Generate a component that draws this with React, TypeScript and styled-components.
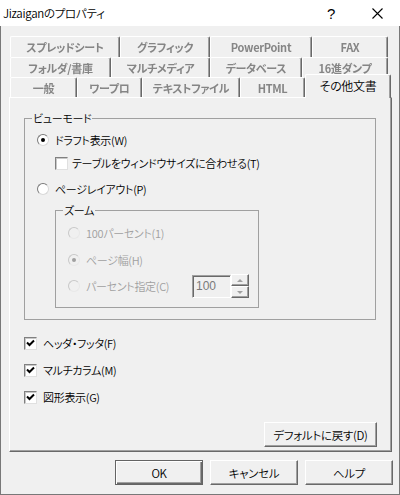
import React from "react";
import styled, { createGlobalStyle, css } from "styled-components";

const GlobalStyle = createGlobalStyle`
  * { box-sizing: border-box; }
  html, body { margin: 0; padding: 0; background: #f0f0f0; }
  body {
    font-family: "Noto Sans CJK JP", "Noto Sans", sans-serif;
    font-size: 11px;
    font-weight: 350;
    letter-spacing: -0.3px;
    color: #000;
    font-feature-settings: "palt";
  }
`;

type TabDef = { label: string; w: number; active?: boolean };

const tabRows: { h: number; tabs: TabDef[] }[] = [
  {
    h: 21,
    tabs: [
      { label: "スプレッドシート", w: 110 },
      { label: "グラフィック", w: 90 },
      { label: "PowerPoint", w: 102 },
      { label: "FAX", w: 76 },
    ],
  },
  {
    h: 20,
    tabs: [
      { label: "フォルダ/書庫", w: 101 },
      { label: "マルチメディア", w: 99 },
      { label: "データベース", w: 92 },
      { label: "16進ダンプ", w: 86 },
    ],
  },
  {
    h: 20,
    tabs: [
      { label: "一般", w: 67 },
      { label: "ワープロ", w: 65 },
      { label: "テキストファイル", w: 98 },
      { label: "HTML", w: 65 },
      { label: "その他文書", w: 86, active: true },
    ],
  },
];

export default function App() {
  return (
    <>
      <GlobalStyle />
      <Window>
        <TitleBar>
          <Title>Jizaiganのプロパティ</Title>
          <CaptionButton>?</CaptionButton>
          <CaptionButton>
            <svg width="11" height="11" viewBox="0 0 11 11">
              <path d="M0.5 0.5 L10.5 10.5 M10.5 0.5 L0.5 10.5" stroke="#000" strokeWidth="1.1" />
            </svg>
          </CaptionButton>
        </TitleBar>

        <Body>
          <TabStrip>
            {tabRows.map((row, i) => (
              <TabRow key={i} $h={row.h}>
                {row.tabs.map((t) => (
                  <Tab key={t.label} $w={t.w} $active={t.active}>
                    <TabLabel $active={t.active}>{t.label}</TabLabel>
                  </Tab>
                ))}
              </TabRow>
            ))}
          </TabStrip>

          <Panel>
            <GroupBox>
              <Legend>ビューモード</Legend>
              <GroupBody $pad="7px 0 11px 12px">
                <Row>
                  <Radio $checked />
                  <Text>ドラフト表示(W)</Text>
                </Row>
                <Row $mt={7} $ml={18} $gap={4}>
                  <CheckBox />
                  <Text>テーブルをウィンドウサイズに合わせる(T)</Text>
                </Row>
                <Row $mt={10}>
                  <Radio />
                  <Text>ページレイアウト(P)</Text>
                </Row>

                <ZoomBox>
                  <Legend>ズーム</Legend>
                  <GroupBody $pad="8px 9px 9px 12px">
                    <Row>
                      <Radio $disabled />
                      <Text $disabled>100パーセント(1)</Text>
                    </Row>
                    <Row $mt={11}>
                      <Radio $disabled $checked />
                      <Text $disabled>ページ幅(H)</Text>
                    </Row>
                    <Row $mt={6} $h={24}>
                      <Radio $disabled />
                      <Text $disabled>パーセント指定(C)</Text>
                      <Spin>
                        <SpinInput>100</SpinInput>
                        <SpinButtons>
                          <SpinButton>
                            <Arrow $up />
                          </SpinButton>
                          <SpinButton>
                            <Arrow />
                          </SpinButton>
                        </SpinButtons>
                      </Spin>
                    </Row>
                  </GroupBody>
                </ZoomBox>
              </GroupBody>
            </GroupBox>

            <Row $mt={15}>
              <CheckBox $checked />
              <Text>ヘッダ・フッタ(F)</Text>
            </Row>
            <Row $mt={11}>
              <CheckBox $checked />
              <Text>マルチカラム(M)</Text>
            </Row>
            <Row $mt={11}>
              <CheckBox $checked />
              <Text>図形表示(G)</Text>
            </Row>

            <DefaultButton>デフォルトに戻す(D)</DefaultButton>
          </Panel>

          <ButtonRow>
            <Button $default>OK</Button>
            <Button>キャンセル</Button>
            <Button>ヘルプ</Button>
          </ButtonRow>
        </Body>
      </Window>
    </>
  );
}

function CheckBox({ $checked }: { $checked?: boolean }) {
  return (
    <Box>
      {$checked && (
        <svg width="9" height="9" viewBox="0 0 9 9">
          <path d="M1 3.5 L3.5 6 L8 1.5" stroke="#000" strokeWidth="2" fill="none" />
        </svg>
      )}
    </Box>
  );
}

const Window = styled.div`
  width: 400px;
  height: 495px;
  display: flex;
  flex-direction: column;
  background: #f0f0f0;
`;

const TitleBar = styled.div`
  height: 26px;
  flex: none;
  display: flex;
  align-items: center;
  background: #fff;
  padding-left: 3px;
`;

const Title = styled.div`
  flex: 1;
  font-size: 11.5px;
  line-height: 14px;
`;

const CaptionButton = styled.div`
  width: 46px;
  height: 26px;
  display: flex;
  align-items: center;
  justify-content: center;
  font-family: "Liberation Sans", sans-serif;
  font-size: 15px;
`;

const Body = styled.div`
  flex: 1;
  display: flex;
  flex-direction: column;
  border: 1px solid #787878;
  border-top: none;
  padding: 10px 7px 9px 8px;
`;

const TabStrip = styled.div`
  display: flex;
  flex-direction: column;
  padding-left: 1px;
`;

const TabRow = styled.div<{ $h: number }>`
  display: flex;
  align-items: flex-start;
  height: ${({ $h }) => $h}px;
`;

const Tab = styled.div<{ $w: number; $active?: boolean }>`
  width: ${({ $w }) => $w}px;
  height: 100%;
  flex: none;
  display: flex;
  align-items: center;
  justify-content: center;
  background: #f0f0f0;
  border-top: 1px solid #fff;
  border-left: 1px solid #fff;
  border-right: 1px solid #696969;
  box-shadow: inset -1px 0 0 #a0a0a0;
  border-top-left-radius: 2px;
  border-top-right-radius: 2px;

  ${({ $active }) =>
    $active &&
    css`
      height: 24px;
      margin-top: -3px;
      padding-bottom: 2px;
      position: relative;
      z-index: 1;
    `}
`;

const TabLabel = styled.span<{ $active?: boolean }>`
  line-height: 14px;
  white-space: nowrap;
  ${({ $active }) =>
    $active
      ? css`
          color: #000;
          font-size: 12px;
        `
      : css`
          color: #858585;
          font-weight: 700;
          filter: blur(0.6px);
        `}
`;

const Panel = styled.div`
  display: flex;
  flex-direction: column;
  border: 1px solid;
  border-color: #fff #696969 #696969 #fff;
  box-shadow: inset -1px -1px 0 #a0a0a0;
  padding: 13px 15px 4px 14px;
`;

const GroupBox = styled.fieldset`
  margin: 0;
  padding: 0;
  min-width: 0;
  border: 1px solid #a0a0a0;
`;

const ZoomBox = styled(GroupBox)`
  margin: 6px 0 0 18px;
  width: 204px;
`;

const Legend = styled.legend`
  margin-left: 7px;
  padding: 0 1px;
  line-height: 14px;
`;

const GroupBody = styled.div<{ $pad: string }>`
  display: flex;
  flex-direction: column;
  padding: ${({ $pad }) => $pad};
`;

const Row = styled.div<{ $mt?: number; $ml?: number; $gap?: number; $h?: number }>`
  display: flex;
  align-items: center;
  gap: ${({ $gap }) => $gap ?? 6}px;
  height: ${({ $h }) => $h ?? 16}px;
  margin-top: ${({ $mt }) => $mt ?? 0}px;
  margin-left: ${({ $ml }) => $ml ?? 0}px;
`;

const Text = styled.span<{ $disabled?: boolean }>`
  line-height: 14px;
  white-space: nowrap;
  color: ${({ $disabled }) => ($disabled ? "#a0a0a0" : "#000")};
`;

const Radio = styled.span<{ $checked?: boolean; $disabled?: boolean }>`
  width: 12px;
  height: 12px;
  flex: none;
  border-radius: 50%;
  border: 1px solid;
  border-color: ${({ $disabled }) =>
    $disabled ? "#c8c8c8 #e8e8e8 #e8e8e8 #c8c8c8" : "#7a7a7a #d8d8d8 #d8d8d8 #7a7a7a"};
  background: ${({ $disabled }) => ($disabled ? "#f0f0f0" : "#fff")};
  display: flex;
  align-items: center;
  justify-content: center;

  &::after {
    content: "";
    display: ${({ $checked }) => ($checked ? "block" : "none")};
    width: 4px;
    height: 4px;
    border-radius: 50%;
    background: ${({ $disabled }) => ($disabled ? "#a0a0a0" : "#000")};
  }
`;

const Box = styled.span`
  width: 13px;
  height: 13px;
  flex: none;
  border: 1px solid;
  border-color: #808080 #e0e0e0 #e0e0e0 #808080;
  box-shadow: inset 1px 1px 0 #c8c8c8;
  background: #fff;
  display: flex;
  align-items: center;
  justify-content: center;
`;

const Spin = styled.div`
  margin-left: auto;
  display: flex;
  align-items: center;
`;

const SpinInput = styled.div`
  width: 39px;
  height: 23px;
  border: 1px solid;
  border-color: #a0a0a0 #fff #fff #a0a0a0;
  box-shadow: inset 1px 1px 0 #696969;
  display: flex;
  align-items: center;
  padding-left: 3px;
  color: #7a7a7a;
  font-family: "Liberation Sans", sans-serif;
  font-size: 12px;
  letter-spacing: 0;
`;

const SpinButtons = styled.div`
  display: flex;
  flex-direction: column;
  width: 18px;
  height: 24px;
`;

const SpinButton = styled.div`
  flex: 1;
  display: flex;
  align-items: center;
  justify-content: center;
  background: #f0f0f0;
  border: 1px solid;
  border-color: #fff #696969 #696969 #fff;
  box-shadow: inset -1px -1px 0 #a0a0a0;
`;

const Arrow = styled.span<{ $up?: boolean }>`
  width: 0;
  height: 0;
  border-left: 3px solid transparent;
  border-right: 3px solid transparent;
  ${({ $up }) =>
    $up
      ? css`
          border-bottom: 3px solid #a0a0a0;
        `
      : css`
          border-top: 3px solid #a0a0a0;
        `}
`;

const Button = styled.button<{ $default?: boolean }>`
  width: 88px;
  height: 25px;
  margin: 0;
  padding: 0;
  font: inherit;
  font-size: 11.5px;
  letter-spacing: inherit;
  font-feature-settings: inherit;
  color: #000;
  background: #f0f0f0;
  border: 1px solid;
  border-color: #fff #696969 #696969 #fff;
  box-shadow: inset -1px -1px 0 #a0a0a0;
  white-space: nowrap;

  ${({ $default }) =>
    $default &&
    css`
      border-color: #646464;
      box-shadow: inset 1px 1px 0 #fff, inset -1px -1px 0 #696969, inset -2px -2px 0 #a0a0a0;
    `}
`;

const DefaultButton = styled(Button)`
  width: 113px;
  align-self: flex-end;
  margin-top: 17px;
  margin-right: -1px;
`;

const ButtonRow = styled.div`
  display: flex;
  justify-content: flex-end;
  gap: 7px;
  margin-top: 8px;
  margin-right: -1px;
`;
